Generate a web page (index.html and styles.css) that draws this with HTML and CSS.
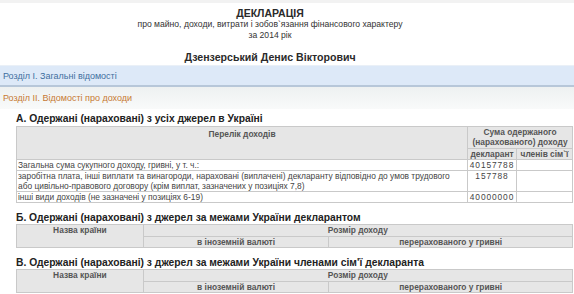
FILE: index.html
```html
<!DOCTYPE html>
<html lang="uk">
<head>
<meta charset="utf-8">
<title>Декларація</title>
<link rel="stylesheet" href="styles.css">
</head>
<body>
<div class="topstrip"></div>
<header class="head">
  <div class="title">ДЕКЛАРАЦІЯ</div>
  <div class="subtitle">про майно, доходи, витрати і зобов`язання фінансового характеру</div>
  <div class="subtitle">за 2014 рік</div>
  <div class="person">Дзензерський Денис Вікторович</div>
</header>
<div class="section section-blue">Розділ І. Загальні відомості</div>
<div class="section section-orange">Розділ ІІ. Відомості про доходи</div>

<main class="content">
  <h2 class="sub">А. Одержані (нараховані) з усіх джерел в Україні</h2>
  <table class="tbl tbl-a">
    <colgroup><col class="c-main"><col class="c-decl"><col class="c-fam"></colgroup>
    <tr class="hr1">
      <th rowspan="2" class="top">Перелік доходів</th>
      <th colspan="2">Сума одержаного<br>(нарахованого) доходу</th>
    </tr>
    <tr class="hr2">
      <th>декларант</th>
      <th class="nowrap">членів сім`ї</th>
    </tr>
    <tr>
      <td>Загальна сума сукупного доходу, гривні, у т. ч.:</td>
      <td class="num">40157788</td>
      <td></td>
    </tr>
    <tr>
      <td>заробітна плата, інші виплати та винагороди, нараховані (виплачені) декларанту відповідно до умов трудового або цивільно-правового договору (крім виплат, зазначених у позиціях 7,8)</td>
      <td class="num">157788</td>
      <td></td>
    </tr>
    <tr>
      <td>інші види доходів (не зазначені у позиціях 6-19)</td>
      <td class="num">40000000</td>
      <td></td>
    </tr>
  </table>

  <h2 class="sub">Б. Одержані (нараховані) з джерел за межами України декларантом</h2>
  <table class="tbl tbl-b">
    <colgroup><col class="c-country"><col class="c-cur"><col class="c-uah"></colgroup>
    <tr class="br1">
      <th rowspan="2" class="top">Назва країни</th>
      <th colspan="2">Розмір доходу</th>
    </tr>
    <tr class="br2">
      <th>в іноземній валюті</th>
      <th class="uah">перерахованого у гривні</th>
    </tr>
  </table>

  <h2 class="sub">В. Одержані (нараховані) з джерел за межами України членами сім'ї декларанта</h2>
  <table class="tbl tbl-b">
    <colgroup><col class="c-country"><col class="c-cur"><col class="c-uah"></colgroup>
    <tr class="br1">
      <th rowspan="2" class="top">Назва країни</th>
      <th colspan="2">Розмір доходу</th>
    </tr>
    <tr class="br2">
      <th>в іноземній валюті</th>
      <th class="uah">перерахованого у гривні</th>
    </tr>
  </table>
</main>
</body>
</html>
```

FILE: styles.css
```css
html, body {
  margin: 0;
  padding: 0;
  background: #ffffff;
  font-family: "Liberation Sans", Arial, sans-serif;
  color: #333;
  overflow: hidden;
}
.topstrip {
  height: 3px;
  background: #f2f2f2;
}
.head {
  width: 540px;
  text-align: center;
  padding-top: 4px;
}
.title {
  font-weight: bold;
  font-size: 10.5px;
  line-height: 12px;
  color: #2a2a2a;
}
.subtitle {
  font-size: 8.6px;
  line-height: 11px;
  color: #333;
}
.person {
  margin-top: 10px;
  font-weight: bold;
  font-size: 10.6px;
  line-height: 13px;
  color: #2a2a2a;
}
.section {
  font-size: 9px;
  padding-left: 3px;
  display: flex;
  align-items: center;
}
.section-blue {
  margin-top: 1px;
  height: 19px;
  background: #dde9f8;
  border-top: 1px solid #eaf0f7;
  border-bottom: 2px solid #b7c7d9;
  color: #3f6fa0;
}
.section-orange {
  height: 22px;
  background: linear-gradient(#eef1f1, #f9fafa);
  color: #c77a33;
}
.content {
  padding-left: 16px;
}
.sub {
  margin: 4px 0 0;
  font-size: 10.3px;
  line-height: 12px;
  font-weight: bold;
  color: #222;
}
.tbl {
  border-collapse: collapse;
  width: 557px;
  font-size: 8.4px;
  line-height: 10px;
  margin-bottom: 9px;
}
.tbl th, .tbl td {
  border: 1px solid #c9c9c9;
  padding: 0 1px;
  vertical-align: top;
}
.tbl th {
  background: #e6e6e6;
  font-weight: bold;
  color: #555;
  text-align: center;
}
.tbl td {
  color: #444;
}
.tbl-a {
  margin-top: 1px;
}
.c-main { width: 452px; }
.c-decl { width: 49px; }
.c-fam { width: 56px; }
.hr1 th { height: 21px; }
.hr1 th.top { padding-top: 2px; }
.hr2 th { height: 9px; }
.nowrap { white-space: nowrap; text-align: left; }
.num {
  text-align: center;
  letter-spacing: 0.9px;
}
.c-country { width: 127px; }
.c-cur { width: 186px; }
.c-uah { width: 244px; }
.br1 th { height: 11px; }
.br2 th { height: 10px; }
.uah { padding-right: 40px; }
```
